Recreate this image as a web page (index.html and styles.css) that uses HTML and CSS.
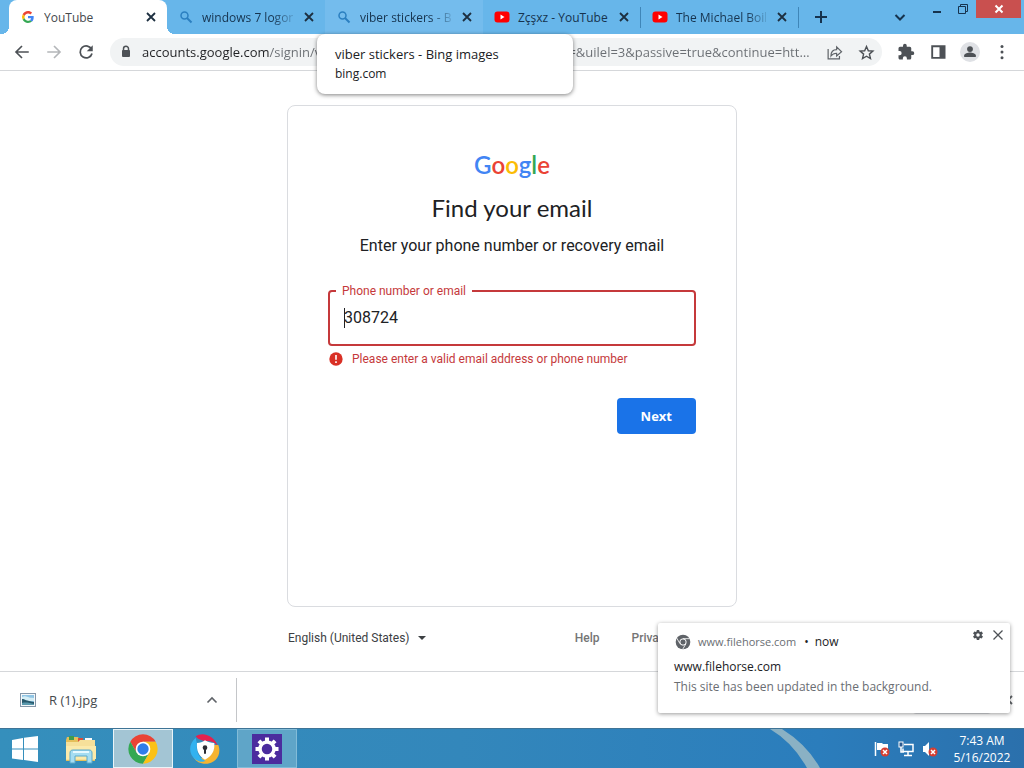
FILE: index.html
```html
<!DOCTYPE html>
<html lang="en">
<head>
    <meta charset="UTF-8">
    <meta name="viewport" content="width=device-width, initial-scale=1.0">
    <title>Find your email</title>
    <link rel="stylesheet" href="styles.css">
</head>
<body>

<!-- shared icons -->
<svg class="icon-defs" width="0" height="0" aria-hidden="true">
    <symbol id="icon-close" viewBox="0 0 16 16"><path d="M4 4l8 8M12 4l-8 8" fill="none" stroke="currentColor" stroke-width="1.800"/></symbol>
    <symbol id="icon-search" viewBox="0 0 16 16"><circle cx="6.500" cy="6.500" r="3.500" fill="none" stroke="#2b7fc0" stroke-width="1.500"/><path d="M9 9l4.500 4.500" stroke="#2b7fc0" stroke-width="2"/></symbol>
    <symbol id="icon-youtube" viewBox="0 0 16 16"><rect x="0.500" y="2.500" width="15" height="11" rx="3" fill="#f00"/><path d="M6.500 5.500v5l4-2.500z" fill="#fff"/></symbol>
    <symbol id="icon-gear" viewBox="0 0 24 24"><path fill="currentColor" fill-rule="evenodd" d="M19.430 12.980c.040-.320.070-.640.070-.980s-.030-.660-.070-.980l2.110-1.650c.190-.150.240-.420.120-.640l-2-3.460c-.120-.220-.390-.300-.610-.220l-2.490 1c-.520-.400-1.080-.730-1.690-.980l-.380-2.650C14.460 2.180 14.250 2 14 2h-4c-.250 0-.460.180-.490.420l-.380 2.650c-.610.250-1.170.590-1.690.980l-2.490-1c-.230-.090-.490 0-.610.220l-2 3.460c-.130.220-.070.490.120.640l2.110 1.650c-.040.320-.070.650-.070.980s.030.660.070.980l-2.110 1.650c-.190.150-.240.420-.120.640l2 3.460c.120.220.390.300.610.220l2.490-1c.520.400 1.080.730 1.690.980l.380 2.650c.030.240.240.420.490.420h4c.250 0 .460-.180.490-.420l.380-2.650c.610-.250 1.170-.590 1.690-.980l2.490 1c.230.090.490 0 .610-.220l2-3.460c.120-.220.070-.490-.120-.640zM12 15.500a3.500 3.500 0 1 1 0-7 3.500 3.500 0 0 1 0 7z"/></symbol>
</svg>

<header class="browser">
    <div class="tab-strip">
        <div class="tab active">
            <svg class="tab-icon" viewBox="0 0 48 48"><path fill="#ea4335" d="M24 12c3.500 0 6.200 1.400 8 3l6-6C34.500 5.700 29.700 3.500 24 3.500 16 3.500 9.100 8.100 5.700 14.800l7 5.400C14.400 15.300 18.800 12 24 12z"/><path fill="#4285f4" d="M43.500 24.500c0-1.500-.100-2.700-.400-4H24v8h11c-.500 2.800-2.100 5-4.500 6.500l6.800 5.300c4-3.700 6.200-9.100 6.200-15.800z"/><path fill="#fbbc05" d="M12.700 28a12 12 0 0 1 0-7.800l-7-5.400a20.500 20.500 0 0 0 0 18.500z"/><path fill="#34a853" d="M24 44.500c5.500 0 10.200-1.800 13.300-4.900L30.500 35a12.200 12.200 0 0 1-17.800-7l-7 5.300C9.100 40 16 44.500 24 44.500z"/></svg>
            <span class="tab-title">YouTube</span>
            <button class="tab-close" aria-label="Close tab"><svg viewBox="0 0 16 16"><use href="#icon-close"/></svg></button>
        </div>
        <div class="tab">
            <svg class="tab-icon" viewBox="0 0 16 16"><use href="#icon-search"/></svg>
            <span class="tab-title fade">windows 7 logon screen</span>
            <button class="tab-close" aria-label="Close tab"><svg viewBox="0 0 16 16"><use href="#icon-close"/></svg></button>
        </div>
        <div class="tab hovered">
            <svg class="tab-icon" viewBox="0 0 16 16"><use href="#icon-search"/></svg>
            <span class="tab-title fade">viber stickers - Bing images</span>
            <button class="tab-close" aria-label="Close tab"><svg viewBox="0 0 16 16"><use href="#icon-close"/></svg></button>
            <div class="tab-card">
                <div class="tab-card-title">viber stickers - Bing images</div>
                <div class="tab-card-site">bing.com</div>
            </div>
        </div>
        <div class="tab divided">
            <svg class="tab-icon" viewBox="0 0 16 16"><use href="#icon-youtube"/></svg>
            <span class="tab-title">Zçşxz - YouTube</span>
            <button class="tab-close" aria-label="Close tab"><svg viewBox="0 0 16 16"><use href="#icon-close"/></svg></button>
        </div>
        <div class="tab divided">
            <svg class="tab-icon" viewBox="0 0 16 16"><use href="#icon-youtube"/></svg>
            <span class="tab-title fade">The Michael Boikson Show</span>
            <button class="tab-close" aria-label="Close tab"><svg viewBox="0 0 16 16"><use href="#icon-close"/></svg></button>
        </div>
        <button class="new-tab" aria-label="New tab"><svg viewBox="0 0 16 16"><path d="M8 2v12M2 8h12" stroke="currentColor" stroke-width="2"/></svg></button>
        <div class="window-controls">
            <button class="tab-search" aria-label="Search tabs"><svg viewBox="0 0 16 16"><path d="M3.500 6L8 10.500 12.500 6" fill="none" stroke="currentColor" stroke-width="2"/></svg></button>
            <button class="window-btn" aria-label="Minimize"><svg viewBox="0 0 16 16"><path d="M4 11h8" stroke="currentColor" stroke-width="2"/></svg></button>
            <button class="window-btn" aria-label="Restore"><svg viewBox="0 0 16 16"><path d="M3.500 5.500h7v7h-7zM5.500 5V3.500h7v7H11" fill="none" stroke="currentColor"/></svg></button>
            <button class="window-btn close" aria-label="Close"><svg viewBox="0 0 16 16"><path d="M4.500 4.500l7 7M11.500 4.500l-7 7" stroke="currentColor" stroke-width="2"/></svg></button>
        </div>
    </div>

    <div class="toolbar">
        <button class="tool" aria-label="Back"><svg viewBox="0 0 24 24"><path d="M21 12H4M12 4l-8 8 8 8" fill="none" stroke="#4d5156" stroke-width="2.200"/></svg></button>
        <button class="tool" aria-label="Forward"><svg viewBox="0 0 24 24"><path d="M3 12h17M12 4l8 8-8 8" fill="none" stroke="#b4b6b9" stroke-width="2.200"/></svg></button>
        <button class="tool" aria-label="Reload"><svg viewBox="0 0 24 24"><path d="M19.500 8.500A8 8 0 1 0 20 14" fill="none" stroke="#4d5156" stroke-width="2.300"/><path d="M21 3v8h-8z" fill="#4d5156"/></svg></button>
        <div class="omnibox">
            <svg class="lock" viewBox="0 0 16 16"><path d="M5.500 7V4.800a2.500 2.500 0 0 1 5 0V7" fill="none" stroke="#4d5156" stroke-width="1.500"/><rect x="4" y="6" width="8" height="7" rx="1" fill="#4d5156"/></svg>
            <input class="url" type="text" aria-label="Address" value="accounts.google.com/signin/v2/usernamerecovery?service=youtube&amp;v=&amp;uilel=3&amp;passive=true&amp;continue=https://www.youtube.com/signin">
            <button class="tool small" aria-label="Share"><svg viewBox="0 0 24 24"><path d="M3 7v14h16v-4" fill="none" stroke="#5f6368" stroke-width="1.700"/><path d="M7 17c0-6 3-9 8-9V4l7 7-7 6v-4c-4 0-6 1-8 4z" fill="none" stroke="#5f6368" stroke-width="1.600"/></svg></button>
            <button class="tool small" aria-label="Bookmark"><svg viewBox="0 0 24 24"><path d="M12 3.500l2.600 6 6.400.600-4.900 4.200 1.500 6.300L12 17.300l-5.600 3.300 1.500-6.300L3 10.100l6.400-.600z" fill="none" stroke="#4d5156" stroke-width="2"/></svg></button>
        </div>
        <div class="toolbar-actions">
            <button class="tool" aria-label="Extensions"><svg viewBox="0 0 24 24"><path fill="#4d5156" d="M20.500 11H19V7a2 2 0 0 0-2-2h-4V3.500a2.500 2.500 0 0 0-5 0V5H4a2 2 0 0 0-2 2v3.800h1.500a2.700 2.700 0 0 1 0 5.400H2V20c0 1.100.900 2 2 2h3.800v-1.500a2.700 2.700 0 0 1 5.400 0V22H17a2 2 0 0 0 2-2v-4h1.500a2.500 2.500 0 0 0 0-5z"/></svg></button>
            <button class="tool" aria-label="Side panel"><svg viewBox="0 0 24 24"><path fill="#4d5156" fill-rule="evenodd" d="M3 3h19v18H3zM5.500 5.500v13H14v-13z"/></svg></button>
            <button class="tool avatar" aria-label="Profile"><svg viewBox="0 0 24 24"><circle cx="12" cy="12" r="12" fill="#dfe1e5"/><circle cx="12" cy="8.500" r="3.500" fill="#4d5156"/><path d="M5 18v-2c0-2.300 4.500-3.500 7-3.500s7 1.200 7 3.500v2z" fill="#4d5156"/></svg></button>
            <button class="tool" aria-label="Menu"><svg viewBox="0 0 24 24"><g fill="#4d5156"><circle cx="12" cy="4.500" r="2"/><circle cx="12" cy="12" r="2"/><circle cx="12" cy="19.500" r="2"/></g></svg></button>
        </div>
    </div>
</header>

<main class="page">
    <form class="card">
        <div class="logo" role="img" aria-label="Google"><span class="blue">G</span><span class="red">o</span><span class="yellow">o</span><span class="blue">g</span><span class="green">l</span><span class="red">e</span></div>
        <h1>Find your email</h1>
        <p class="subtitle">Enter your phone number or recovery email</p>
        <div class="field">
            <input type="text" id="identifier" value="308724" aria-describedby="identifier-error">
            <label for="identifier">Phone number or email</label>
            <span class="caret"></span>
        </div>
        <div class="error" id="identifier-error">
            <svg viewBox="0 0 24 24"><circle cx="12" cy="12" r="10" fill="#d93025"/><path d="M12 6v7M12 15.500V18" stroke="#fff" stroke-width="2.400"/></svg>
            <span>Please enter a valid email address or phone number</span>
        </div>
        <button class="next-btn" type="button">Next</button>
    </form>
    <footer class="page-footer">
        <div class="language">
            <select aria-label="Language">
                <option>English (United States)</option>
            </select>
            <svg viewBox="0 0 8 4"><path d="M0 0h8L4 4z" fill="#3c4043"/></svg>
        </div>
        <nav class="links">
            <a href="#">Help</a>
            <a href="#">Privacy</a>
            <a href="#">Terms</a>
        </nav>
    </footer>
</main>

<section class="downloads">
    <div class="download-item">
        <svg class="file-icon" viewBox="0 0 16 16"><rect x="0.500" y="1.500" width="15" height="13" fill="#f5f8fa" stroke="#8496a8"/><path d="M2 3h12v10H2z" fill="#8fc4e4"/><path d="M2 5c4-2 5 1 12 1v3H2z" fill="#d4edf5"/><path d="M2 7c3 0 4 2 12 3v3H2z" fill="#28596c"/><path d="M2 11c4-1 8 0 12 1v1H2z" fill="#5b9aae"/></svg>
        <span class="file-name">R (1).jpg</span>
        <button class="download-menu" aria-label="Download options"><svg viewBox="0 0 16 16"><path d="M3.500 10.500L8 6l4.500 4.500" fill="none" stroke="currentColor" stroke-width="1.600"/></svg></button>
    </div>
    <button class="show-all">Show all</button>
    <button class="close-bar" aria-label="Close downloads"><svg viewBox="0 0 16 16"><use href="#icon-close"/></svg></button>
</section>

<nav class="taskbar">
    <button class="start" aria-label="Start"><svg viewBox="0 0 26 26"><path fill="#fff" d="M0 4l11-2v10.500H0zM12 1.800L26 0v12.500H12zM0 13.500h11V24L0 22.500zM12 13.500h14V26l-14-2z"/></svg></button>
    <button class="task" aria-label="File Explorer">
        <svg viewBox="0 0 32 32"><path d="M1 7l1-3h11l2 3h15v21H1z" fill="#e5bf59"/><path d="M4 3h5v4H4z" fill="#3f9c4e"/><path d="M13 5h5v4h-5z" fill="#d94c37"/><path d="M20 5h7v3h-7z" fill="#fafafa"/><path d="M1 9h12l2-2h15v20H1z" fill="#f6e09a"/><path d="M1 13h30v13H1z" fill="#fbeaab"/><path d="M5 30V20c0-2 1-3 3-3h16c2 0 3 1 3 3v10h-5v-7H10v7z" fill="#a5ddf2" stroke="#5aa9cb"/><path d="M8 19h16" stroke="#e6f9ff" stroke-width="2"/></svg>
    </button>
    <button class="task current" aria-label="Google Chrome">
        <svg viewBox="0 0 48 48"><path fill="#ea4335" d="M4.950 13a22 22 0 0 1 38.100 0H24l-9.500 16.500z"/><path fill="#34a853" d="M4.950 13A22 22 0 0 0 24 46l9.500-16.500h-19z"/><path fill="#fbc116" d="M43.050 13A22 22 0 0 1 24 46l9.500-16.500L24 13z"/><circle cx="24" cy="24" r="11" fill="#fff"/><circle cx="24" cy="24" r="8.500" fill="#2f7de9"/></svg>
    </button>
    <button class="task" aria-label="Secure Browser">
        <svg viewBox="0 0 48 48"><path fill="#e5214e" d="M10 5C20-3 40 4 44 22c-4-8-10-10-18-10-6 0-12-2-16-7z"/><path fill="#f7b431" d="M44 18c6 16-6 30-22 28-8-1-13-5-15-10 12 5 30 0 31-18z"/><path fill="#32b2f0" d="M10 7C-2 18 0 32 10 40c5 3 10 4 15 2-9-4-15-13-13-26z"/><path fill="#fff" d="M24 11c5 3 9 4 14 4 1 12-4 20-14 25-9-5-13-13-12-25 5 0 8-1 12-4z"/><circle cx="24" cy="22" r="3.500" fill="#2b2b33"/><path d="M22.500 23h3v8h-3z" fill="#2b2b33"/></svg>
    </button>
    <button class="task open" aria-label="PC settings">
        <svg viewBox="0 0 30 30"><rect width="30" height="30" fill="#4b2c9e"/><circle cx="15" cy="15" r="7" fill="none" stroke="#fff" stroke-width="3.500"/><g stroke="#fff" stroke-width="4"><path d="M15 3.500v4M15 22.500v4M3.500 15h4M22.500 15h4M6.900 6.900l2.800 2.800M20.300 20.300l2.800 2.800M6.900 23.100l2.800-2.800M20.300 9.700l2.800-2.800"/></g></svg>
    </button>
    <svg class="streak" viewBox="0 0 60 40" preserveAspectRatio="none"><path d="M0 0h12q25 16 38 40h-13Q23 14 0 0z" fill="#8ab1c4"/></svg>
    <div class="tray">
        <svg viewBox="0 0 16 16"><path d="M1.500 1v14" stroke="#fff" stroke-width="1.500"/><path d="M3 2h5l1 1h5v6H3z" fill="#fff"/><circle cx="11" cy="11" r="4.500" fill="#d53e31"/><path d="M9 9l4 4M13 9l-4 4" stroke="#fff" stroke-width="1.500"/></svg>
        <svg viewBox="0 0 16 16"><path d="M6 3.500h9v7H5v-3M10 11v3M6 14.500h8M3 6v5h3" fill="none" stroke="#fff" stroke-width="1.500"/><rect x="1" y="1" width="4" height="5" fill="#2a5a90" stroke="#fff"/></svg>
        <svg viewBox="0 0 16 16"><path d="M1 5h2l4-4v14l-4-4H1z" fill="#fff"/><circle cx="11" cy="11" r="4.500" fill="#d53e31"/><path d="M9 9l4 4M13 9l-4 4" stroke="#fff" stroke-width="1.500"/></svg>
    </div>
    <div class="clock">
        <div>7:43 AM</div>
        <div>5/16/2022</div>
    </div>
</nav>

<aside class="notification">
    <div class="notification-head">
        <svg class="site-icon" viewBox="0 0 48 48"><circle cx="24" cy="24" r="22" fill="#5f6368"/><circle cx="24" cy="24" r="9.500" fill="#5f6368" stroke="#fff" stroke-width="3"/><path d="M24 14h20M15 29L5 12M33 29L23 46" stroke="#fff" stroke-width="2.500"/></svg>
        <span class="origin">www.filehorse.com</span>
        <span class="dot">•</span>
        <span class="when">now</span>
        <div class="notification-actions">
            <button aria-label="Notification settings"><svg viewBox="0 0 24 24"><use href="#icon-gear"/></svg></button>
            <button aria-label="Dismiss"><svg viewBox="0 0 16 16"><path d="M2 2l12 12M14 2L2 14" stroke="currentColor" stroke-width="1.700"/></svg></button>
        </div>
    </div>
    <div class="notification-title">www.filehorse.com</div>
    <div class="notification-text">This site has been updated in the background.</div>
</aside>

</body>
</html>
```
FILE: styles.css
```css
* {
    box-sizing: border-box;
}
body {
    margin: 0;
    min-height: 100vh;
    display: flex;
    flex-direction: column;
    position: relative;
    background: #fff;
    font-family: "Open Sans", "Noto Sans", sans-serif;
    font-size: 12px;
    color: #202124;
}
button {
    border: none;
    background: none;
    padding: 0;
    margin: 0;
    font: inherit;
    color: inherit;
    display: flex;
    align-items: center;
    justify-content: center;
}
svg {
    display: block;
    flex: none;
}
.icon-defs {
    position: absolute;
}

/* tab strip */
.tab-strip {
    display: flex;
    height: 34px;
    padding: 0 3px 0 9px;
    background: #67b6ea;
    color: #16334e;
}
.tab {
    position: relative;
    flex: 0 1 158px;
    min-width: 0;
    display: flex;
    align-items: center;
    gap: 8px;
    padding: 0 8px 0 11px;
}
.tab.active {
    background: #fff;
    color: #45494d;
    border-radius: 8px 8px 0 0;
}
.tab.active::before,
.tab.active::after {
    content: "";
    position: absolute;
    bottom: 0;
    width: 8px;
    height: 8px;
}
.tab.active::before {
    right: 100%;
    background: radial-gradient(circle at 0 0, transparent 8px, #fff 8px);
}
.tab.active::after {
    left: 100%;
    background: radial-gradient(circle at 100% 0, transparent 8px, #fff 8px);
}
.tab.hovered {
    background: #74bced;
}
.tab.divided {
    border-right: 1px solid transparent;
    border-image: linear-gradient(transparent 8px, #3f86b8 8px, #3f86b8 27px, transparent 27px) 1;
}
.tab-icon {
    width: 16px;
    height: 16px;
}
.tab.active .tab-icon {
    width: 14px;
    height: 14px;
    margin: 1px;
}
.tab-title {
    flex: 1;
    min-width: 0;
    overflow: hidden;
    white-space: nowrap;
}
.tab-title.fade {
    -webkit-mask-image: linear-gradient(90deg, #000 70px, transparent 96px);
    mask-image: linear-gradient(90deg, #000 70px, transparent 96px);
}
.tab-close,
.tab-close svg {
    width: 16px;
    height: 16px;
    color: #1d2f40;
}
.tab-card {
    position: absolute;
    z-index: 5;
    top: 34px;
    left: -8px;
    width: 256px;
    padding: 10px 18px;
    background: #fff;
    border-radius: 8px;
    box-shadow: 0 1px 4px rgba(0, 0, 0, 0.5);
    color: #202124;
    line-height: 20px;
    white-space: nowrap;
}
.tab-card-title {
    font-size: 13px;
}
.new-tab {
    width: 44px;
}
.new-tab svg {
    width: 16px;
    height: 16px;
}
.window-controls {
    display: flex;
    margin-left: auto;
    align-items: flex-start;
}
.tab-search {
    width: 32px;
    height: 34px;
    margin-right: 8px;
}
.tab-search svg,
.window-btn svg {
    width: 16px;
    height: 16px;
}
.window-btn {
    width: 26px;
    height: 18px;
}
.window-btn.close {
    width: 45px;
    background: #c9504f;
    color: #fff;
}

/* toolbar */
.toolbar {
    display: flex;
    align-items: center;
    height: 37px;
    padding: 0 6px;
    border-bottom: 1px solid #d5d7da;
}
.tool {
    width: 32px;
    height: 32px;
    flex: none;
}
.tool svg {
    width: 18px;
    height: 18px;
}
.tool.small svg {
    width: 17px;
    height: 17px;
}
.tool.avatar svg {
    width: 20px;
    height: 20px;
}
.omnibox {
    flex: 1;
    min-width: 0;
    display: flex;
    align-items: center;
    height: 28px;
    margin: 0 8px;
    border-radius: 14px;
    background: #f1f3f4;
}
.lock {
    width: 16px;
    height: 16px;
    margin: 0 8px;
}
.url {
    flex: 1;
    min-width: 0;
    margin-right: 7px;
    padding: 0;
    border: none;
    font: 13px/20px "Open Sans", "Noto Sans", sans-serif;
    text-overflow: ellipsis;
    color: transparent;
    background: linear-gradient(90deg, #202124 127px, #6a6e73 127px);
    -webkit-background-clip: text;
    background-clip: text;
}
.toolbar-actions {
    display: flex;
}

/* sign-in page */
.page {
    flex: 1;
    width: 450px;
    max-width: 100%;
    margin: 0 auto;
    padding-top: 34px;
    font-family: Roboto, sans-serif;
}
.card {
    display: flex;
    flex-direction: column;
    min-height: 502px;
    padding: 47px 40px 36px;
    border: 1px solid #dadce0;
    border-radius: 8px;
}
.logo {
    font-family: Lato, sans-serif;
    font-size: 24px;
    line-height: 24px;
    text-align: center;
    font-weight: 600;
}
.blue {
    color: #4285f4;
}
.red {
    color: #ea4335;
}
.yellow {
    color: #fbbc05;
}
.green {
    color: #34a853;
}
h1 {
    margin: 15px 0 0;
    font: 400 24px/32px Lato, sans-serif;
    text-align: center;
}
.subtitle {
    margin: 10px 0 32px;
    font-size: 16px;
    line-height: 24px;
    text-align: center;
}
.field {
    position: relative;
}
.field input {
    display: block;
    width: 100%;
    height: 56px;
    padding: 0 14px 2px;
    border: 2px solid #c5393b;
    border-radius: 4px;
    background: #fff;
    color: #202124;
    font: 16px Roboto, sans-serif;
    outline: none;
}
.field label {
    position: absolute;
    top: -7px;
    left: 8px;
    padding: 0 6px;
    background: #fff;
    color: #c5393b;
    line-height: 16px;
}
.caret {
    position: absolute;
    top: 18px;
    left: 16px;
    width: 1px;
    height: 20px;
    background: #202124;
}
.error {
    display: flex;
    align-items: center;
    gap: 8px;
    margin-top: 4px;
    line-height: 18px;
    color: #c5393b;
}
.error svg {
    width: 16px;
    height: 16px;
}
.next-btn {
    align-self: flex-end;
    margin-top: 30px;
    padding: 0 24px;
    height: 36px;
    border-radius: 4px;
    background: #1a73e8;
    color: #fff;
    font: 700 13px "Open Sans", sans-serif;
}
.page-footer {
    display: flex;
    justify-content: space-between;
    align-items: center;
    padding: 23px 0;
    line-height: 16px;
}
.language {
    display: flex;
    align-items: center;
    gap: 8px;
}
.language select {
    appearance: none;
    border: none;
    padding: 0 0 0 1px;
    background: none;
    color: #3c4043;
    font: 12px/16px Roboto, sans-serif;
}
.language svg {
    width: 8px;
    height: 4px;
}
.links {
    display: flex;
    gap: 32px;
}
.links a {
    color: #757575;
    font-weight: 500;
    text-decoration: none;
}

/* downloads bar */
.downloads {
    display: flex;
    align-items: center;
    height: 57px;
    padding-right: 8px;
    border-top: 1px solid #d5d7da;
}
.download-item {
    display: flex;
    align-items: center;
    width: 237px;
    height: 44px;
    padding: 0 16px 0 20px;
    border-right: 1px solid #c4c6c9;
    color: #45494d;
}
.file-icon {
    width: 16px;
    height: 16px;
    margin-right: 13px;
}
.file-name {
    font-size: 13px;
}
.download-menu {
    margin-left: auto;
    color: #5f6368;
}
.download-menu svg,
.close-bar svg {
    width: 16px;
    height: 16px;
}
.close-bar {
    color: #5f6368;
}
.show-all {
    width: 80px;
    height: 28px;
    margin: 0 8px 0 auto;
    border: 1px solid #dadce0;
    border-radius: 4px;
}

/* taskbar */
.taskbar {
    display: flex;
    align-items: center;
    gap: 2px;
    height: 40px;
    background: linear-gradient(90deg, #358fbc, #3387bb 45%, #2b7dbc 80%, #2b70ac);
    border-top: 1px solid #3f7496;
    color: #fff;
}
.start {
    width: 49px;
    height: 39px;
}
.start svg {
    width: 26px;
    height: 26px;
}
.task {
    width: 60px;
    height: 39px;
    border: 1px solid transparent;
}
.task svg {
    width: 32px;
    height: 32px;
}
.task.current {
    background: #a3c5d4;
    border: 1px solid #e9f4f8;
}
.task.open {
    background: #5fa5c8;
    border-color: #82bcd8;
}
.task.open svg {
    width: 30px;
    height: 30px;
}
.streak {
    width: 60px;
    height: 39px;
    margin-left: auto;
    margin-right: 42px;
}
.tray {
    display: flex;
    gap: 8px;
}
.tray svg {
    width: 16px;
    height: 16px;
}
.clock {
    width: 84px;
    text-align: center;
    line-height: 17px;
}

/* notification */
.notification {
    position: absolute;
    right: 14px;
    bottom: 55px;
    width: 352px;
    padding: 8px 4px 16px 16px;
    background: #fff;
    border-radius: 2px;
    box-shadow: 0 1px 4px rgba(0, 0, 0, 0.4);
    line-height: 20px;
}
.notification-head {
    display: flex;
    align-items: center;
    height: 22px;
    margin-bottom: 4px;
}
.site-icon {
    width: 16px;
    height: 16px;
    margin: 0 7px 0 1px;
}
.origin {
    font-size: 11px;
    color: #6a6e73;
}
.dot {
    margin: 0 6px 0 8px;
}
.notification-actions {
    display: flex;
    align-self: flex-start;
    gap: 4px;
    margin-left: auto;
}
.notification-actions button {
    width: 16px;
    height: 8px;
    color: #4d5156;
}
.notification-actions svg {
    width: 12px;
    height: 12px;
}
.notification-text {
    color: #6a6e73;
}
```
